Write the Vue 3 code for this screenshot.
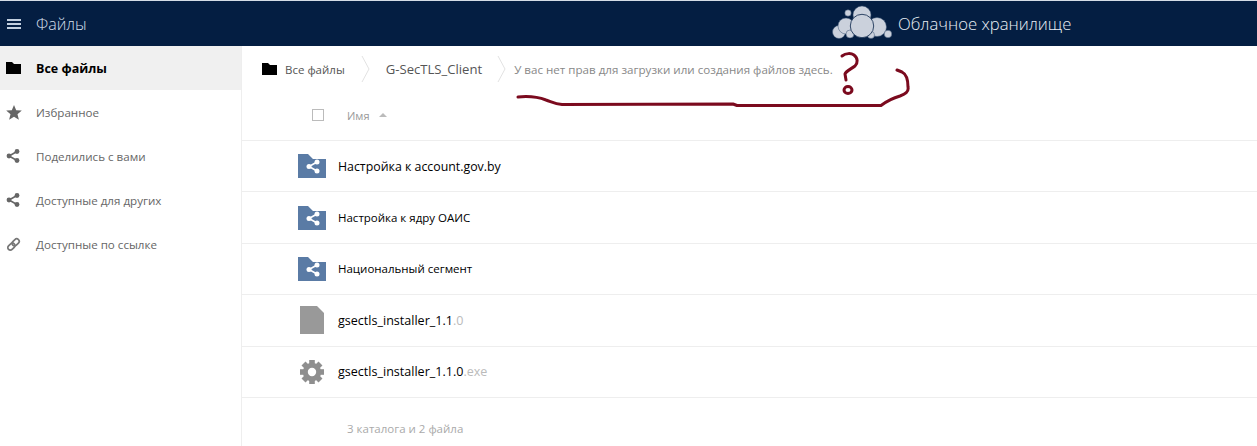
<script setup>
const navItems = [
  { label: 'Все файлы', icon: 'folder', active: true },
  { label: 'Избранное', icon: 'star' },
  { label: 'Поделились с вами', icon: 'share' },
  { label: 'Доступные для других', icon: 'share' },
  { label: 'Доступные по ссылке', icon: 'link' },
]
const rows = [
  { name: 'Настройка к account.gov.by', ext: '', icon: 'shared', size: 'tight' },
  { name: 'Настройка к ядру ОАИС', ext: '', icon: 'shared', size: 'small' },
  { name: 'Национальный сегмент', ext: '', icon: 'shared', size: 'small' },
  { name: 'gsectls_installer_1.1', ext: '.0', icon: 'file', size: '' },
  { name: 'gsectls_installer_1.1.0', ext: '.exe', icon: 'gear', size: '' },
]
const gearTeeth = [0, 45, 90, 135, 180, 225, 270, 315]
</script>

<template>
  <div class="page">
    <header class="topbar">
      <div class="title-group">
        <svg class="burger" width="14" height="10" viewBox="0 0 14 10">
          <path d="M0 0h14v2H0zM0 4h14v2H0zM0 8h14v2H0z" fill="#c3d0e0" />
        </svg>
        <span class="app-title">Файлы</span>
      </div>
      <div class="brand">
        <svg class="cloud" width="62" height="34" viewBox="0 0 62 34">
          <g fill="#cbd1dc" stroke="#3b5273" stroke-width="0.5">
            <circle cx="18" cy="8" r="3.200" />
            <circle cx="32" cy="10" r="9" />
            <circle cx="9" cy="27" r="6.500" />
            <circle cx="16" cy="21" r="8" />
            <circle cx="47" cy="22" r="9.500" />
            <circle cx="58" cy="29" r="3.800" />
            <circle cx="20" cy="29" r="4" />
            <circle cx="41" cy="30" r="3.500" />
          </g>
          <circle cx="32" cy="21" r="11.700" fill="#cbd1dc" stroke="#1d3558" stroke-width="0.9" />
        </svg>
        <span class="brand-name">Облачное хранилище</span>
      </div>
    </header>

    <div class="content">
      <nav class="sidebar">
        <div v-for="item in navItems" :key="item.label" class="nav-item" :class="{ active: item.active }">
          <span class="nav-icon">
            <svg v-if="item.icon === 'folder'" width="15" height="12" viewBox="0 0 15 12">
              <path d="M0 0h6l2 2h7v10H0z" fill="#000" />
            </svg>
            <svg v-else-if="item.icon === 'star'" width="16" height="15" viewBox="0 0 16 15">
              <path d="M8 0l2.200 5.200 5.600.4-4.300 3.600 1.400 5.500L8 11.700l-4.900 3 1.400-5.500L.2 5.600l5.600-.4z" fill="#666" />
            </svg>
            <svg v-else-if="item.icon === 'share'" width="14" height="14" viewBox="0 0 14 14">
              <path d="M11 2.500L3 7l8 4.500" fill="none" stroke="#666" stroke-width="1.600" />
              <circle cx="11" cy="2.500" r="2.400" fill="#666" />
              <circle cx="3" cy="7" r="2.400" fill="#666" />
              <circle cx="11" cy="11.500" r="2.400" fill="#666" />
            </svg>
            <svg v-else width="15" height="15" viewBox="0 0 15 15">
              <g fill="none" stroke="#777" stroke-width="1.700" transform="rotate(-45 7.500 7.500)">
                <rect x="0.500" y="5" width="8" height="5" rx="2.500" />
                <rect x="6.500" y="5" width="8" height="5" rx="2.500" />
              </g>
            </svg>
          </span>
          <span class="nav-label">{{ item.label }}</span>
        </div>
      </nav>

      <main class="main">
        <div class="crumbs">
          <svg class="crumb-home" width="15" height="12" viewBox="0 0 15 12">
            <path d="M0 0h6l2 2h7v10H0z" fill="#000" />
          </svg>
          <span class="crumb-first">Все файлы</span>
          <svg class="chevron" width="9" height="26" viewBox="0 0 9 26">
            <path d="M1 0l7 13-7 13" fill="none" stroke="#e2e2e2" />
          </svg>
          <span class="crumb-current">G-SecTLS_Client</span>
          <svg class="chevron second" width="9" height="26" viewBox="0 0 9 26">
            <path d="M1 0l7 13-7 13" fill="none" stroke="#e2e2e2" />
          </svg>
          <span class="notice">У вас нет прав для загрузки или создания файлов здесь.</span>
        </div>

        <div class="table-head">
          <span class="checkbox"></span>
          <span class="col-name">Имя</span>
          <svg width="8" height="4" viewBox="0 0 8 4"><path d="M0 4l4-4 4 4z" fill="#bbb" /></svg>
        </div>

        <div v-for="row in rows" :key="row.name" class="row">
          <span class="row-icon" :class="{ wide: row.icon === 'shared' }">
            <svg v-if="row.icon === 'shared'" width="28" height="24" viewBox="0 0 28 24">
              <path d="M0 0h10l5 5h13v19H0z" fill="#5a7ba5" />
              <path d="M19 8l-8 4.500 8 4.500" fill="none" stroke="#fff" stroke-width="1.600" />
              <circle cx="19" cy="8" r="2.500" fill="#fff" />
              <circle cx="11" cy="12.500" r="2.500" fill="#fff" />
              <circle cx="19" cy="17" r="2.500" fill="#fff" />
            </svg>
            <svg v-else-if="row.icon === 'file'" width="24" height="28" viewBox="0 0 24 28">
              <path d="M0 0h17l7 7v21H0z" fill="#999" />
            </svg>
            <svg v-else width="24" height="24" viewBox="0 0 24 24">
              <g fill="#8f8f8f">
                <rect
                  v-for="angle in gearTeeth"
                  :key="angle"
                  x="9.200"
                  y="0"
                  width="5.600"
                  height="6"
                  :transform="`rotate(${angle} 12 12)`"
                />
              </g>
              <circle cx="12" cy="12" r="6.700" fill="none" stroke="#8f8f8f" stroke-width="5" />
            </svg>
          </span>
          <span class="file-name" :class="row.size">{{ row.name }}<span class="ext">{{ row.ext }}</span></span>
        </div>

        <div class="summary">3 каталога и 2 файла</div>
      </main>
    </div>

    <svg class="scribble" width="1257" height="446" viewBox="0 0 1257 446">
      <g fill="none" stroke="#7b0a1e" stroke-linecap="round" stroke-linejoin="round" stroke-width="3">
        <path d="M518 97C528 96 538 97 546 100C552 102 555 104 562 104.500L733 104L737 105.500L881 105.500C887 101 893 98 900 96C905 94 909 92 908 87C908 80 906 74 902 72L897 70" />
        <path d="M842 56C846 53 851 53 854 55C858 58 858 63 855 66C851 69 846 71 845 74L846 80" />
        <ellipse cx="848" cy="90" rx="4" ry="3.500" />
      </g>
    </svg>
  </div>
</template>

<style>
html,
body {
  margin: 0;
  background: #fff;
}
</style>

<style scoped>
.page {
  position: relative;
  width: 1257px;
  height: 446px;
  overflow: hidden;
  background: #fff;
  font-family: "Open Sans", "Noto Sans", sans-serif;
  font-size: 12px;
  color: #555;
}
.topbar {
  box-sizing: border-box;
  height: 46px;
  border-top: 1px solid #d5dde6;
  background: #041e42;
  display: flex;
  align-items: center;
}
.title-group {
  display: flex;
  align-items: center;
  width: 830px;
  padding-left: 7px;
  box-sizing: border-box;
}
.burger {
  margin-right: 15px;
}
.app-title {
  font-size: 16px;
  font-weight: 300;
  color: #d3deea;
}
.brand {
  display: flex;
  align-items: center;
  margin-top: -1px;
}
.cloud {
  margin-right: 6px;
  margin-top: -2px;
}
.brand-name {
  font-size: 16.700px;
  font-weight: 300;
  color: #e9eef4;
}
.content {
  display: flex;
  height: 400px;
}
.sidebar {
  box-sizing: border-box;
  width: 242px;
  flex: none;
  border-right: 1px solid #eee;
}
.nav-item {
  height: 44px;
  display: flex;
  align-items: center;
  color: #666;
  font-size: 11.600px;
}
.nav-item.active {
  background: #f0f0f0;
  color: #000;
  font-weight: 700;
  font-size: 12.500px;
}
.nav-icon {
  width: 36px;
  padding-left: 6px;
  box-sizing: border-box;
  display: flex;
  align-items: center;
}
.main {
  flex: 1;
  min-width: 0;
}
.crumbs {
  height: 46px;
  display: flex;
  align-items: center;
  padding-left: 20px;
}
.crumb-home {
  margin-right: 8px;
}
.crumb-first {
  font-size: 11.500px;
  color: #555;
}
.chevron {
  margin: 0 16px 0 16px;
}
.crumb-current {
  font-size: 13.100px;
  color: #555;
}
.chevron.second {
  margin: 0 8px 0 15px;
}
.notice {
  font-size: 11.600px;
  color: #888;
}
.table-head {
  box-sizing: border-box;
  height: 49px;
  padding-bottom: 2px;
  display: flex;
  align-items: center;
  padding-left: 70px;
  border-bottom: 1px solid #eee;
}
.checkbox {
  box-sizing: border-box;
  width: 12px;
  height: 12px;
  border: 1px solid #bbb;
  margin-right: 23px;
}
.col-name {
  font-size: 11px;
  color: #999;
  margin-right: 9px;
}
.row {
  box-sizing: border-box;
  height: 51.400px;
  display: flex;
  align-items: center;
  padding-left: 56px;
  border-bottom: 1px solid #eee;
}
.row-icon {
  width: 40px;
  display: flex;
  padding-left: 2px;
  box-sizing: border-box;
}
.row-icon.wide {
  padding-left: 0;
}
.file-name {
  font-size: 12.550px;
  color: #000;
}
.file-name.tight {
  font-size: 12.350px;
}
.file-name.small {
  font-size: 11.500px;
}
.ext {
  color: #bbb;
}
.summary {
  padding: 23px 0 0 105px;
  font-size: 11.500px;
  color: #aaa;
}
.scribble {
  position: absolute;
  inset: 0;
  pointer-events: none;
}
</style>
